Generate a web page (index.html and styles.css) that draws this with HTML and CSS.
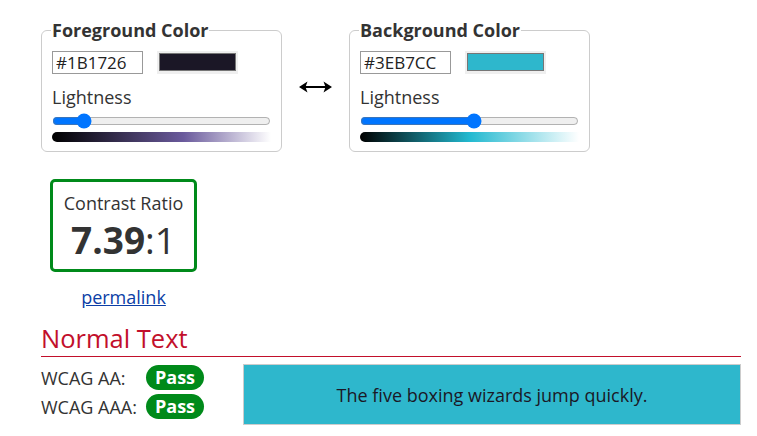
FILE: index.html
```html
<!DOCTYPE html>
<html lang="en">
<head>
  <meta charset="UTF-8" />
  <meta name="viewport" content="width=device-width, initial-scale=1.0" />
  <title>Contrast Checker</title>
  <link rel="stylesheet" href="styles.css">
</head>
<body>
  <div class="container">
    <div class="pickers">
      <!-- Foreground -->
      <fieldset class="picker">
        <legend>Foreground Color</legend>
        <div class="picker-row">
          <input type="text" class="hex" value="#1B1726" />
          <div class="swatch"><span class="swatch-color cor-fg"></span></div>
        </div>
        <label class="lightness">Lightness</label>
        <input type="range" class="slider" min="0" max="100" value="12" />
        <div class="gradiente gradiente-fg"></div>
      </fieldset>

      <!-- Trocar cores -->
      <div class="troca">
        <svg width="35" height="14" viewBox="0 0 35 14">
          <path d="M5 7 H30" stroke="#000" stroke-width="2" />
          <path d="M1 7 L9.5 1.5 L7.5 7 L9.5 12.5 Z" fill="#000" />
          <path d="M34 7 L25.5 1.5 L27.5 7 L25.5 12.5 Z" fill="#000" />
        </svg>
      </div>

      <!-- Background -->
      <fieldset class="picker">
        <legend>Background Color</legend>
        <div class="picker-row">
          <input type="text" class="hex" value="#3EB7CC" />
          <div class="swatch"><span class="swatch-color cor-bg"></span></div>
        </div>
        <label class="lightness">Lightness</label>
        <input type="range" class="slider" min="0" max="100" value="52" />
        <div class="gradiente gradiente-bg"></div>
      </fieldset>
    </div>

    <div class="resultado">
      <div class="ratio">
        <div class="ratio-titulo">Contrast Ratio</div>
        <div class="ratio-valor"><strong>7.39</strong>:1</div>
      </div>
      <a href="#" class="permalink">permalink</a>
    </div>

    <h2>Normal Text</h2>
    <div class="teste">
      <div class="niveis">
        <div class="nivel"><span class="nivel-nome">WCAG AA:</span><span class="pass">Pass</span></div>
        <div class="nivel"><span class="nivel-nome">WCAG AAA:</span><span class="pass">Pass</span></div>
      </div>
      <div class="amostra">The five boxing wizards jump quickly.</div>
    </div>
  </div>
</body>
</html>
```

FILE: styles.css
```css
:root {
  --cor-texto: #333333;
  --cor-borda: #cccccc;
  --cor-verde: #008a1a;
  --cor-vermelho: #c20f2b;
  --cor-link: #0b3ea6;
  --cor-amostra: #2eb7cc;
}

* {
  box-sizing: border-box;
  margin: 0;
  padding: 0;
  font-family: 'Open Sans', sans-serif;
}

body {
  color: var(--cor-texto);
  background: #fff;
  font-size: 18px;
}

.container {
  width: 741px;
  padding: 19px 0 0 41px;
}

/* Seletores de cor */
.pickers {
  display: flex;
  align-items: center;
  gap: 16px;
}

.picker {
  width: 241px;
  border: 1px solid var(--cor-borda);
  border-radius: 6px;
  padding: 10px 10px 9px 10px;
}

.picker legend {
  font-weight: bold;
  font-size: 18px;
  line-height: 22px;
  padding: 0 1px;
  margin-left: -1px;
}

.picker-row {
  display: flex;
  align-items: center;
  gap: 14px;
}

.hex {
  width: 91px;
  height: 23px;
  border: 1px solid #999;
  padding: 0 3px;
  font-size: 17px;
  color: #222;
}

.swatch {
  width: 81px;
  height: 23px;
  background: #efefef;
  padding: 2px 2px 3px 2px;
}

.swatch-color {
  display: block;
  width: 100%;
  height: 100%;
  border: 1px solid #767676;
}

.cor-fg { background: #1B1726; }
.cor-bg { background: var(--cor-amostra); }

.lightness {
  display: block;
  font-size: 18px;
  line-height: 24px;
  margin-top: 11px;
}

.slider {
  display: block;
  width: 219px;
  height: 16px;
  margin-top: 4px;
  accent-color: #0075ff;
}

.gradiente {
  width: 219px;
  height: 10px;
  margin-top: 3px;
  border-radius: 5px 0 0 5px;
}

.gradiente-fg {
  background: linear-gradient(to right, #000, #6a5a9c 60%, #fff);
}

.gradiente-bg {
  background: linear-gradient(to right, #000, #22b9d0 50%, #fff);
}

.troca {
  width: 35px;
  height: 14px;
  margin-top: 3px;
}

.troca svg {
  display: block;
}

/* Resultado */
.resultado {
  width: 165px;
  margin-top: 27px;
  display: flex;
  flex-direction: column;
  align-items: center;
}

.ratio {
  width: 147px;
  height: 93px;
  border: 3px solid var(--cor-verde);
  border-radius: 5px;
  text-align: center;
  padding-top: 9px;
}

.ratio-titulo {
  font-size: 18px;
  line-height: 24px;
}

.ratio-valor {
  font-size: 37px;
  line-height: 50px;
}

.permalink {
  margin-top: 13px;
  font-size: 18px;
  line-height: 24px;
  color: var(--cor-link);
}

h2 {
  color: var(--cor-vermelho);
  font-weight: normal;
  font-size: 25.5px;
  line-height: 34px;
  margin-top: 12px;
  padding-bottom: 1px;
  border-bottom: 1px solid var(--cor-vermelho);
}

.teste {
  display: flex;
  gap: 39px;
  margin-top: 7px;
}

.niveis {
  display: flex;
  flex-direction: column;
  gap: 4px;
  margin-top: 1px;
}

.nivel {
  display: flex;
  align-items: center;
  font-size: 18px;
}

.nivel-nome {
  width: 105px;
}

.pass {
  width: 58px;
  height: 25px;
  line-height: 25px;
  border-radius: 13px;
  background: var(--cor-verde);
  color: #fff;
  font-weight: bold;
  text-align: center;
  font-size: 18px;
}

.amostra {
  width: 498px;
  height: 61px;
  background: var(--cor-amostra);
  border: 1px solid var(--cor-borda);
  color: #1B1726;
  font-size: 18px;
  display: flex;
  align-items: center;
  justify-content: center;
}
```
